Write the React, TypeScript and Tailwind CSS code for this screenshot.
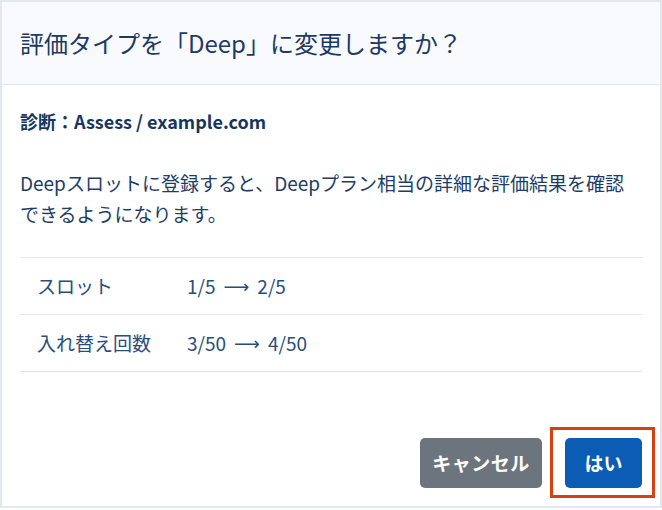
import React from "react";

type Row = { label: string; from: string; to: string };

const rows: Row[] = [
  { label: "スロット", from: "1/5", to: "2/5" },
  { label: "入れ替え回数", from: "3/50", to: "4/50" },
];

export default function App() {
  return (
    <div
      className="h-[510px] w-[662px] bg-white"
      style={{ fontFamily: '"Noto Sans CJK JP", "Noto Sans", sans-serif' }}
    >
      <div className="flex h-[508px] flex-col border-2 border-[#e3e8ef] bg-white">
        <div className="flex h-[83px] items-center border-b border-[#e3e8ef] bg-[#f8fafd] px-[18px]">
          <h2 className="text-[24px] font-normal leading-none text-[#1c3a63]">
            評価タイプを「Deep」に変更しますか？
          </h2>
        </div>

        <div className="px-[18px] pt-[22px]">
          <p className="text-[18px] font-bold leading-[28px] text-[#183560]">
            診断：Assess / example.com
          </p>
          <p className="mt-[32px] text-[19px] leading-[31px] text-[#1e3d66]">
            Deepスロットに登録すると、Deepプラン相当の詳細な評価結果を確認できるようになります。
          </p>

          <div className="mt-[28px] border-t border-[#e3e7ec]">
            {rows.map((r) => (
              <div
                key={r.label}
                className="flex h-[57px] items-center border-b border-[#e3e7ec] text-[19px] text-[#2b4d7b]"
              >
                <span className="w-[167px] pl-[17px]">{r.label}</span>
                <span className="flex items-center">
                  {r.from}
                  <span className="mx-[8px] text-[18px]" style={{ fontFamily: '"DejaVu Sans", sans-serif' }}>
                    ⟶
                  </span>
                  {r.to}
                </span>
              </div>
            ))}
          </div>
        </div>

        <div className="mt-auto flex justify-end gap-[23px] pb-[18px] pr-[18px]">
          <button className="h-[50px] w-[122px] rounded-[5px] bg-[#6c757d] text-[19px] font-bold tracking-wide text-white">
            キャンセル
          </button>
          <div className="relative">
            <button className="h-[50px] w-[77px] rounded-[5px] bg-[#0b5cb5] text-[19px] font-bold text-white">
              はい
            </button>
            <div className="pointer-events-none absolute -bottom-[10px] -left-[15px] -right-[13px] -top-[11px] border-[3px] border-[#d9400e]" />
          </div>
        </div>
      </div>
    </div>
  );
}
